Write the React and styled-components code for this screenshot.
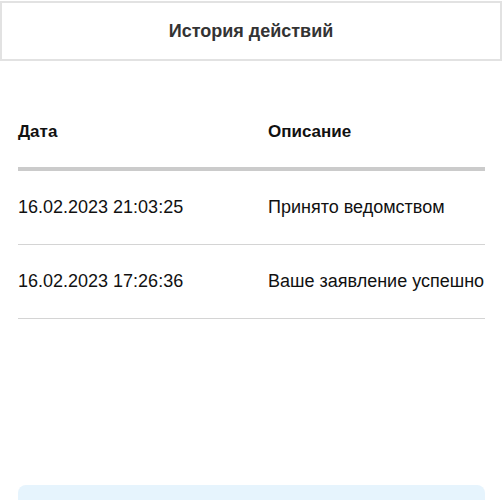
import React from "react";
import styled, { createGlobalStyle } from "styled-components";

const Global = createGlobalStyle`
  html, body { margin: 0; padding: 0; background: #fff; }
  body { font-family: "Liberation Sans", Arial, sans-serif; color: #111; }
`;

const Page = styled.div`
  width: 502px;
  height: 500px;
  overflow: hidden;
  padding-top: 1px;
  box-sizing: border-box;
`;

const TitleBar = styled.div`
  height: 60px;
  box-sizing: border-box;
  border: 2px solid #e2e2e2;
  display: flex;
  align-items: center;
  justify-content: center;
  padding-top: 1px;
  font-size: 18px;
  font-weight: 700;
  color: #333;
`;

const Table = styled.div`
  margin: 36px 17px 0 18px;
  display: flex;
  flex-direction: column;
`;

const Row = styled.div`
  display: grid;
  grid-template-columns: 250px 1fr;
  align-items: center;
  height: 74px;
  flex-shrink: 0;
  box-sizing: border-box;
  border-bottom: ${(p) => (p.$head ? "4px solid #cbcbcb" : "1px solid #d4d4d4")};
  font-size: ${(p) => (p.$head ? "17px" : "18px")};
  font-weight: ${(p) => (p.$head ? 700 : 400)};
  color: #111;
`;

const Cell = styled.div`
  white-space: nowrap;
`;

const InfoBox = styled.div`
  margin: 166px 17px 0 18px;
  height: 40px;
  border-radius: 8px;
  background: #e6f4fd;
`;

const rows = [
  ["16.02.2023 21:03:25", "Принято ведомством"],
  ["16.02.2023 17:26:36", "Ваше заявление успешно"],
];

export default function App() {
  return (
    <Page>
      <Global />
      <TitleBar>История действий</TitleBar>
      <Table>
        <Row $head>
          <Cell>Дата</Cell>
          <Cell>Описание</Cell>
        </Row>
        {rows.map(([d, t]) => (
          <Row key={d}>
            <Cell>{d}</Cell>
            <Cell>{t}</Cell>
          </Row>
        ))}
      </Table>
      <InfoBox />
    </Page>
  );
}
